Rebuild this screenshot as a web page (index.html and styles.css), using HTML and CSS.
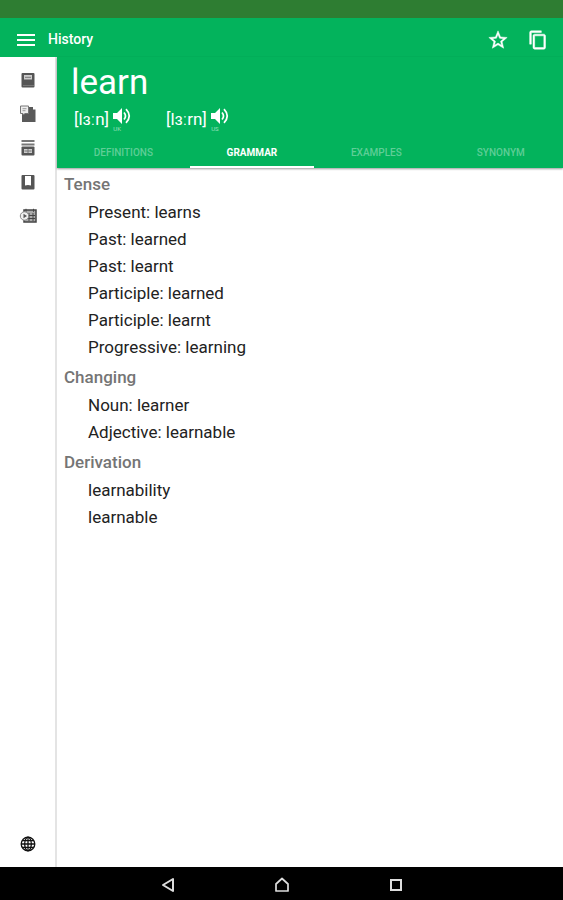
FILE: index.html
```html
<!DOCTYPE html>
<html lang="en">
<head>
    <meta charset="UTF-8">
    <meta name="viewport" content="width=device-width, initial-scale=1.0">
    <title>learn - Dictionary</title>
    <link rel="stylesheet" href="styles.css">
</head>
<body>
    <div class="status-bar"></div>
    <header class="app-bar">
        <button class="icon-btn" aria-label="Menu">
            <svg width="18" height="14" viewBox="0 0 18 14"><path d="M0 2h18M0 7h18M0 12h18" stroke="currentColor" stroke-width="2"/></svg>
        </button>
        <h2>History</h2>
        <div class="actions">
            <button class="icon-btn" aria-label="Favorite">
                <svg width="22" height="22" viewBox="0 0 24 24" fill="currentColor"><path d="M22 9.24l-7.19-.62L12 2 9.19 8.63 2 9.24l5.46 4.73L5.82 21 12 17.27 18.18 21l-1.63-7.03L22 9.24zM12 15.4l-3.76 2.27 1-4.28-3.32-2.88 4.38-.38L12 6.1l1.71 4.04 4.38.38-3.32 2.88 1 4.28L12 15.4z" stroke="currentColor" stroke-width=".5"/></svg>
            </button>
            <button class="icon-btn" aria-label="Copy">
                <svg width="20" height="20" viewBox="0 0 24 24" fill="currentColor"><path d="M16 1H4c-1.100 0-2 .9-2 2v14h2V3h12V1zm3 4H8c-1.100 0-2 .9-2 2v14c0 1.100.9 2 2 2h11c1.100 0 2-.9 2-2V7c0-1.100-.9-2-2-2zm0 16H8V7h11v14z" stroke="currentColor" stroke-width=".6"/></svg>
            </button>
        </div>
    </header>
    <div class="main">
        <nav class="sidebar">
            <button class="side-btn" aria-label="Dictionary">
                <svg width="16" height="16" viewBox="0 0 16 16"><rect x="1.500" y="1" width="13" height="14.500" rx="1" fill="#555"/><rect x="4" y="3" width="8" height="4.500" fill="#ccc"/><path d="M5 5.300h6" stroke="#777"/><path d="M3 13.500h11" stroke="#888" stroke-width=".7"/></svg>
            </button>
            <button class="side-btn" aria-label="Phrases">
                <svg width="18" height="18" viewBox="0 0 18 18"><path d="M9 2h5v2.500h2.500V17H3V9h6z" fill="#5a5a5a"/><path d="M1.500 1h8v7.500H6L4 10V8.500H1.500z" fill="#eee" stroke="#777"/><path d="M3.500 3.700h4M3.500 5.700h3" stroke="#999"/></svg>
            </button>
            <button class="side-btn" aria-label="Flashcards">
                <svg width="16" height="16" viewBox="0 0 16 16"><path d="M1.500 1h13M1.500 4.500h13" stroke="#777" stroke-width="2"/><rect x="1.500" y="6.500" width="13" height="9" rx="1" fill="#555"/><rect x="4" y="9" width="8" height="4" fill="#ccc"/><path d="M4.500 11h7M8 9v4" stroke="#777"/></svg>
            </button>
            <button class="side-btn" aria-label="Bookmarks">
                <svg width="16" height="16" viewBox="0 0 16 16"><rect x="1.500" y="1" width="13" height="14.500" rx="1" fill="#555"/><path d="M5 2h6v9.500L8 11l-3 .5z" fill="#fff"/></svg>
            </button>
            <button class="side-btn" aria-label="Calendar">
                <svg width="18" height="16" viewBox="0 0 18 16"><path d="M5 2h12v12H5z" fill="#aaa" stroke="#444" stroke-width="1.500"/><path d="M7 .8v3M14.500.8v3M10 5v8M14 5v8M6 7.500h10M6 10.500h10" stroke="#444"/><circle cx="5.500" cy="8" r="4.200" fill="#eee" stroke="#888"/><path d="M4.500 5.800L8 8l-3.500 2.200z" fill="#555"/></svg>
            </button>
            <button class="side-btn language" aria-label="Language">
                <svg width="16" height="16" viewBox="0 0 16 16" fill="none" stroke="#111" stroke-width="1.300"><circle cx="8" cy="8" r="6.800"/><ellipse cx="8" cy="8" rx="3.300" ry="6.800"/><path d="M8 1v14M1 8h14M2 4.700h12M2 11.300h12"/></svg>
            </button>
        </nav>
        <div class="content">
            <div class="word-header">
                <h1>learn</h1>
                <div class="pronunciations">
                    <div class="pronunciation">
                        <span class="ipa">[lɜːn]</span>
                        <button class="speaker">
                            <svg width="20" height="18" viewBox="0 0 20 18"><path d="M1 6h4l5-5v16l-5-5H1z" fill="currentColor"/><path d="M12 5.500q3 3.500 0 7M14 2.200q6.500 6.800 0 13.600" fill="none" stroke="currentColor" stroke-width="1.700"/></svg>
                            <span>UK</span>
                        </button>
                    </div>
                    <div class="pronunciation">
                        <span class="ipa">[lɜːrn]</span>
                        <button class="speaker">
                            <svg width="20" height="18" viewBox="0 0 20 18"><path d="M1 6h4l5-5v16l-5-5H1z" fill="currentColor"/><path d="M12 5.500q3 3.500 0 7M14 2.200q6.500 6.800 0 13.600" fill="none" stroke="currentColor" stroke-width="1.700"/></svg>
                            <span>US</span>
                        </button>
                    </div>
                </div>
                <div class="tabs">
                    <button class="tab">DEFINITIONS</button>
                    <button class="tab active">GRAMMAR</button>
                    <button class="tab">EXAMPLES</button>
                    <button class="tab">SYNONYM</button>
                </div>
            </div>
            <div class="grammar">
                <h3>Tense</h3>
                <ul>
                    <li>Present: learns</li>
                    <li>Past: learned</li>
                    <li>Past: learnt</li>
                    <li>Participle: learned</li>
                    <li>Participle: learnt</li>
                    <li>Progressive: learning</li>
                </ul>
                <h3>Changing</h3>
                <ul>
                    <li>Noun: learner</li>
                    <li>Adjective: learnable</li>
                </ul>
                <h3>Derivation</h3>
                <ul>
                    <li>learnability</li>
                    <li>learnable</li>
                </ul>
            </div>
        </div>
    </div>
    <footer class="system-nav">
        <button class="icon-btn" aria-label="Back">
            <svg width="16" height="16" viewBox="0 0 16 16"><path d="M13 2v12L3 8z" fill="none" stroke="currentColor" stroke-width="2" stroke-linejoin="round"/></svg>
        </button>
        <button class="icon-btn" aria-label="Home">
            <svg width="16" height="16" viewBox="0 0 16 16"><path d="M2 14V7l6-5.500L14 7v7z" fill="none" stroke="currentColor" stroke-width="1.700" stroke-linejoin="round"/></svg>
        </button>
        <button class="icon-btn" aria-label="Recent apps">
            <svg width="16" height="16" viewBox="0 0 16 16"><rect x="3" y="3" width="10" height="10" fill="none" stroke="currentColor" stroke-width="2"/></svg>
        </button>
    </footer>
</body>
</html>
```
FILE: styles.css
```css
* {
    box-sizing: border-box;
}
body {
    margin: 0;
    min-height: 100vh;
    display: flex;
    flex-direction: column;
    font-family: Roboto, "Liberation Sans", sans-serif;
    background-color: white;
}
h1, h2, h3, ul {
    margin: 0;
    padding: 0;
}
button {
    padding: 0;
    border: none;
    background: none;
    color: inherit;
    font-family: inherit;
    cursor: pointer;
}
svg {
    display: block;
}
.status-bar {
    height: 18px;
    background-color: #2e7d32;
}
.app-bar {
    display: flex;
    align-items: center;
    height: 39px;
    padding: 5px 15px 0 17px;
    background-color: #03b35c;
    color: white;
}
.app-bar h2 {
    margin-left: 13px;
    padding-bottom: 3px;
    font-size: 14px;
    font-weight: 500;
    line-height: 20px;
}
.actions {
    display: flex;
    align-items: center;
    gap: 19px;
    margin-left: auto;
}
.main {
    display: flex;
    flex: 1;
}
.sidebar {
    display: flex;
    flex-direction: column;
    width: 57px;
    padding: 6px 0;
    border-right: 2px solid #e4e4e4;
}
.side-btn {
    display: flex;
    align-items: center;
    justify-content: center;
    height: 34px;
}
.language {
    margin-top: auto;
}
.content {
    flex: 1;
}
.word-header {
    background-color: #03b35c;
    color: white;
    box-shadow: 0 1px 2px rgba(0, 0, 0, 0.4);
}
h1 {
    padding: 4px 14px 0;
    font-size: 35px;
    font-weight: 400;
    line-height: 44px;
}
.pronunciations {
    display: flex;
    gap: 34px;
    height: 32px;
    padding-left: 17px;
}
.pronunciation {
    display: flex;
    gap: 3px;
}
.ipa {
    font-size: 17px;
    line-height: 28px;
}
.speaker {
    display: flex;
    flex-direction: column;
    align-items: center;
    padding-top: 2px;
}
.speaker span {
    margin-right: 10px;
    color: #9be0be;
    font-size: 6px;
    line-height: 8px;
}
.tabs {
    display: grid;
    grid-template-columns: 16fr 15fr 15fr 15fr;
}
.tab {
    height: 31px;
    padding-top: 2px;
    border-bottom: 2px solid transparent;
    color: #5fce97;
    font-size: 10px;
    font-weight: 500;
}
.tab.active {
    border-bottom-color: white;
    color: white;
    font-weight: 700;
}
.grammar {
    padding: 1px 7px;
}
h3 {
    color: #757575;
    font-size: 17px;
    font-weight: 500;
    line-height: 30px;
}
ul {
    padding: 0 0 1px 24px;
    list-style: none;
}
li {
    color: #222;
    font-size: 17px;
    line-height: 27px;
}
.system-nav {
    display: flex;
    align-items: center;
    justify-content: center;
    gap: 98px;
    height: 33px;
    padding-top: 2px;
    background-color: black;
    color: #ddd;
}
```
